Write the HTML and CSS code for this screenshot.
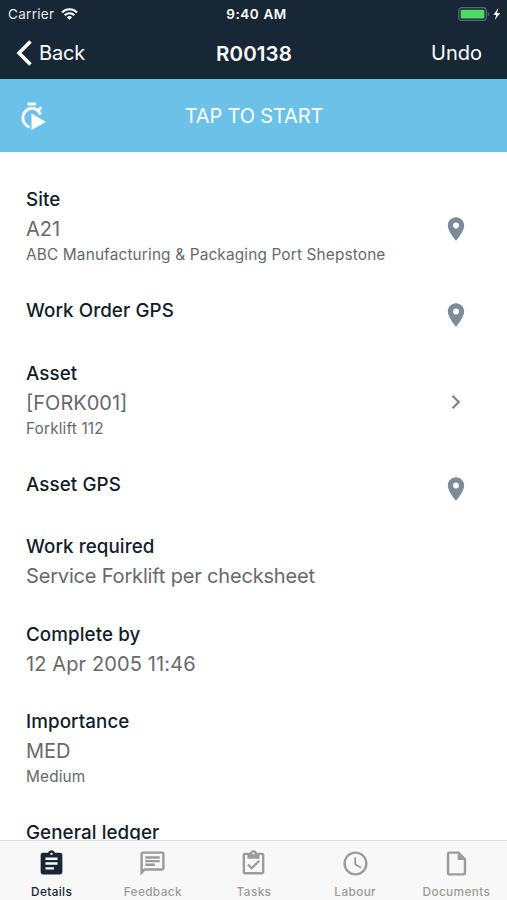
FILE: index.html
```html
<!DOCTYPE html>
<html lang="en">
<head>
<meta charset="utf-8">
<title>R00138</title>
<link rel="stylesheet" href="styles.css">
</head>
<body>
<svg class="defs" aria-hidden="true">
  <symbol id="pin" viewBox="0 0 24 24"><path fill-rule="evenodd" d="M12 2C8.13 2 5 5.13 5 9c0 5.25 7 13 7 13s7-7.75 7-13c0-3.87-3.13-7-7-7zm0 9.5a2.5 2.5 0 0 1 0-5 2.5 2.5 0 0 1 0 5z"/></symbol>
</svg>
<div class="app">
  <header class="top">
    <div class="status">
      <div class="carrier"><span>Carrier</span>
        <svg class="wifi" viewBox="0 0 17 12" fill="none" stroke="#fff" stroke-width="2.1"><path d="M1 4.4a10.6 10.6 0 0 1 15 0M3.7 7.2a6.8 6.8 0 0 1 9.6 0"/><path stroke="none" fill="#fff" d="M8.5 11.8 5.9 9.2a3.7 3.7 0 0 1 5.2 0z"/></svg>
      </div>
      <span class="time">9:40 AM</span>
      <svg class="battery" viewBox="0 0 44 14"><rect x=".7" y=".7" width="27.6" height="12.8" rx="3.2" fill="none" stroke="#5d6872" stroke-width="1.3"/><rect x="2.6" y="2.7" width="23.8" height="8.8" rx="1" fill="#4cd964"/><path d="M29.6 4.8c2 .8 2 3.8 0 4.6z" fill="#5d6872"/><path d="M40.3 1 35.3 8h3l-1.5 5L42.2 6H39z" fill="#fff"/></svg>
    </div>
    <nav class="nav">
      <div class="back"><svg viewBox="0 0 16 26"><path d="M14.5 1.5 3 13l11.5 11.5" fill="none" stroke="#fff" stroke-width="3.6"/></svg><span>Back</span></div>
      <h1>R00138</h1>
      <span class="undo">Undo</span>
    </nav>
  </header>
  <div class="start">
    <svg class="timer" viewBox="0 0 26 28"><path d="M7.5.5h8.5v3H7.5z" fill="#fff"/><path d="M9.6 25.2A9.7 9.7 0 0 1 11.5 6.3c3 0 5.8 1.3 7.6 3.6l1.4 2.8M17.2 9l4.2-3.6" fill="none" stroke="#fff" stroke-width="2.9"/><path d="M11.5 11.2v16.8L25.8 20z" fill="#fff"/></svg>
    <span>TAP TO START</span>
  </div>
  <main class="content">
    <section class="item three"><div><h2>Site</h2><p class="value">A21</p><p class="desc">ABC Manufacturing &amp; Packaging Port Shepstone</p></div><svg class="pin"><use href="#pin"/></svg></section>
    <section class="item one"><div><h2>Work Order GPS</h2></div><svg class="pin"><use href="#pin"/></svg></section>
    <section class="item three"><div><h2>Asset</h2><p class="value">[FORK001]</p><p class="desc">Forklift 112</p></div><svg class="pin" viewBox="0 0 28 28"><path d="m10.5 7.7 6.2 6.3-6.2 6.3" fill="none" stroke="#7b8791" stroke-width="2.3"/></svg></section>
    <section class="item one"><div><h2>Asset GPS</h2></div><svg class="pin"><use href="#pin"/></svg></section>
    <section class="item two"><div><h2>Work required</h2><p class="value prose">Service Forklift per checksheet</p></div></section>
    <section class="item two"><div><h2>Complete by</h2><p class="value date">12 Apr 2005 11:46</p></div></section>
    <section class="item three"><div><h2>Importance</h2><p class="value">MED</p><p class="desc">Medium</p></div></section>
    <section class="item one"><div><h2>General ledger</h2></div></section>
  </main>
  <footer class="tabs">
    <div class="tab active"><svg viewBox="0 0 24 24"><path fill-rule="evenodd" d="M19 3h-4.18C14.4 1.84 13.3 1 12 1s-2.4.84-2.82 2H5a2 2 0 0 0-2 2v14c0 1.1.9 2 2 2h14a2 2 0 0 0 2-2V5a2 2 0 0 0-2-2zm-7 0a1 1 0 1 1 0 2 1 1 0 0 1 0-2zm2 14H7v-2h7v2zm3-4H7v-2h10v2zm0-4H7V7h10v2z"/></svg><span>Details</span></div>
    <div class="tab"><svg viewBox="0 0 24 24"><path d="M4 4h16v12H5.17L4 17.17V4m0-2a2 2 0 0 0-2 2v18l4-4h14a2 2 0 0 0 2-2V4a2 2 0 0 0-2-2H4zm2 10h8v2H6v-2zm0-3h12v2H6V9zm0-3h12v2H6V6z"/></svg><span>Feedback</span></div>
    <div class="tab"><svg viewBox="0 0 24 24"><path fill-rule="evenodd" d="M19 3h-4.18C14.4 1.84 13.3 1 12 1s-2.4.84-2.82 2H5a2 2 0 0 0-2 2v14c0 1.1.9 2 2 2h14a2 2 0 0 0 2-2V5a2 2 0 0 0-2-2zm-7-.2a.9.9 0 1 1 0 1.8.9.9 0 0 1 0-1.8zM5 5h2v3h10V5h2v14H5z"/><path d="m7.4 12.8 3.1 3.1 6.2-6.2" fill="none" stroke="#9b9b9b" stroke-width="1.8"/></svg><span>Tasks</span></div>
    <div class="tab"><svg viewBox="0 0 24 24"><path d="M11.99 2C6.47 2 2 6.48 2 12s4.47 10 9.99 10C17.52 22 22 17.52 22 12S17.52 2 11.99 2zM12 20c-4.42 0-8-3.58-8-8s3.58-8 8-8 8 3.58 8 8-3.58 8-8 8zm.5-13H11v6l5.25 3.15.75-1.23-4.5-2.67z"/></svg><span>Labour</span></div>
    <div class="tab"><svg viewBox="0 0 24 24"><path fill-rule="evenodd" d="M6 2a2 2 0 0 0-2 2v16c0 1.1.9 2 2 2h12a2 2 0 0 0 2-2V8l-6-6H6zm0 2h7v5h5v11H6z"/></svg><span>Documents</span></div>
  </footer>
</div>
</body>
</html>
```
FILE: styles.css
```css
* { box-sizing: border-box; margin: 0; padding: 0; }
body { font-family: Inter, "Liberation Sans", sans-serif; background: #fff; }
svg { display: block; flex: none; }
.defs { display: none; }
.app { height: 900px; display: flex; flex-direction: column; overflow: hidden; }

.top { height: 79px; flex: none; background: #172736; color: #fff; }
.status { height: 27px; display: grid; grid-template-columns: 1fr auto 1fr; align-items: center; padding: 0 5px 0 8px; font-size: 13.5px; }
.carrier { display: flex; align-items: center; gap: 7px; letter-spacing: .3px; color: #e4e7ea; }
.wifi { width: 17px; height: 12px; }
.time { font-weight: 600; letter-spacing: .6px; padding-left: 3px; }
.battery { width: 44px; height: 14px; justify-self: end; }
.nav { height: 52px; display: grid; grid-template-columns: 1fr auto 1fr; align-items: center; padding: 0 25px 0 16px; font-size: 20px; }
.back { display: flex; align-items: center; gap: 7px; letter-spacing: -.2px; }
.back svg { width: 16px; height: 26px; }
.nav h1 { font-size: 20.5px; font-weight: 600; letter-spacing: .1px; padding-left: 10px; }
.undo { justify-self: end; }

.start { height: 73px; flex: none; background: #6bc1e8; color: #fff; display: grid; grid-template-columns: 1fr auto 1fr; align-items: center; padding: 0 20px; font-size: 20px; letter-spacing: -.15px; }
.start span { padding: 1px 0 0 1px; }
.timer { width: 26px; height: 28px; }

.content { flex: 1; min-height: 0; overflow: hidden; padding: 21px 37px 0 26px; }
.item { display: flex; justify-content: space-between; align-items: center; }
.item > div { align-self: flex-start; padding-top: 14.2px; }
.one { height: 62.4px; }
.two { height: 87.3px; }
.three { height: 111.2px; }
.item h2 { font-size: 18.8px; font-weight: 500; line-height: 26px; letter-spacing: .08px; color: #111d2a; }
.value { font-size: 20px; line-height: 32px; color: #67696c; }
.prose { letter-spacing: -.17px; }
.date { letter-spacing: .12px; }
.desc { font-size: 15.4px; line-height: 20px; letter-spacing: .14px; color: #67696c; }
.pin { width: 28px; height: 28px; fill: #7b8b99; }

.tabs { height: 60px; flex: none; display: grid; grid-template-columns: repeat(5, 1fr); background: #f8f8f8; border-top: 1px solid #dedede; padding-left: 1px; }
.tab { display: flex; flex-direction: column; align-items: center; padding-top: 8px; color: #9b9b9b; fill: #9b9b9b; font-size: 11.8px; font-weight: 500; letter-spacing: .38px; }
.tab svg { width: 29px; height: 29px; }
.tab span { line-height: 14px; margin-top: 7px; }
.active { color: #172736; fill: #172736; }
```
